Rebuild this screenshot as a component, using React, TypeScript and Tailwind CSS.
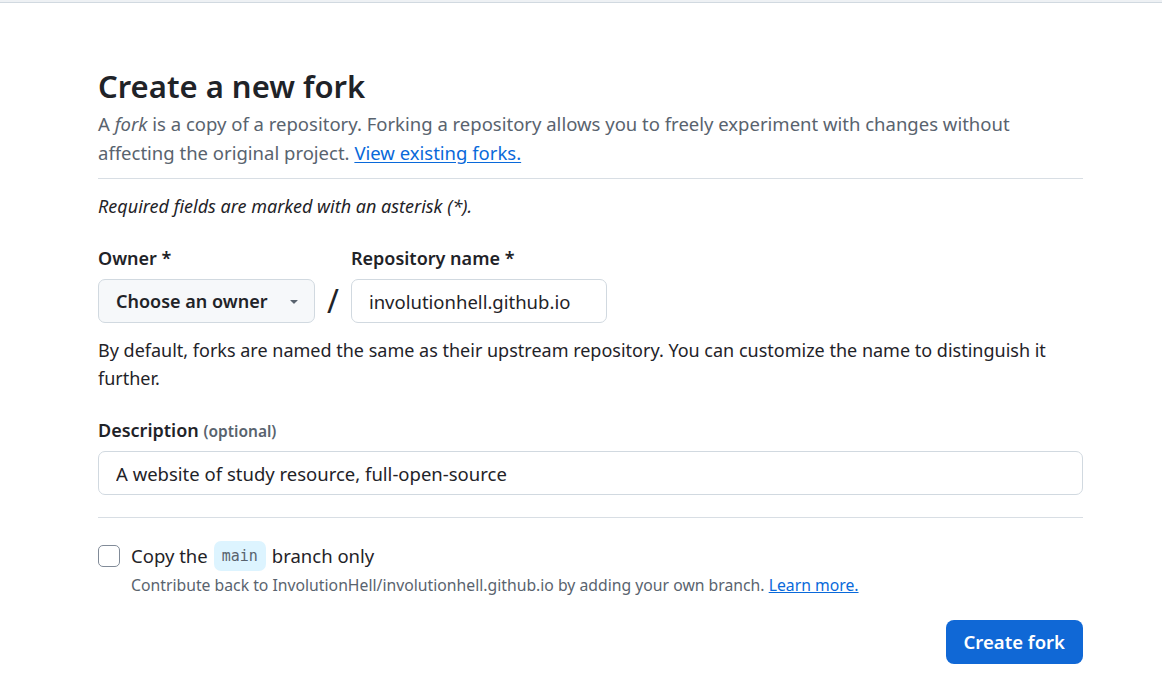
import { useState } from "react";

function Caret() {
  return (
    <svg width="16" height="16" viewBox="0 0 16 16" className="fill-[#59636e]">
      <path d="m4.427 7.427 3.396 3.396a.25.25 0 0 0 .354 0l3.396-3.396A.25.25 0 0 0 11.396 7H4.604a.25.25 0 0 0-.177.427Z" />
    </svg>
  );
}

export default function App() {
  const [repo, setRepo] = useState("involutionhell.github.io");
  const [desc, setDesc] = useState("A website of study resource, full-open-source");
  const [onlyMain, setOnlyMain] = useState(false);

  return (
    <div className="min-h-[690px] bg-white text-[#1f2328] font-['Segoe_UI','Noto_Sans',sans-serif]">
      <div className="h-[2px] bg-[#eef1f4]" />
      <div className="h-px bg-[#d1d9e0]" />

      <main className="w-[985px] ml-[98px] pt-[61px]">
        <h1 className="text-[31px] leading-[44px] font-semibold">Create a new fork</h1>
        <p className="text-[18.5px] leading-[29px] text-[#59636e] mt-[1px]">
          A <em>fork</em> is a copy of a repository. Forking a repository allows you to freely experiment with changes without
          affecting the original project.{" "}
          <a href="#" className="text-[#0969da] underline underline-offset-2">View existing forks.</a>
        </p>

        <hr className="mt-[11px] border-0 h-px bg-[#d8dee4]" />

        <p className="mt-[13px] text-[18px] leading-[28px] italic">Required fields are marked with an asterisk (*).</p>

        <div className="flex items-end gap-[12px] mt-[24px]">
          <div className="flex flex-col">
            <label className="text-[18px] leading-[28px] font-semibold">Owner *</label>
            <button className="mt-[7px] h-[44px] w-[217px] flex items-center justify-between pl-[17px] pr-[12px] bg-[#f6f8fa] border border-[#d1d9e0] rounded-[7px] text-[18px] font-semibold">
              Choose an owner
              <Caret />
            </button>
          </div>
          <span className="text-[32px] leading-[44px] font-normal">/</span>
          <div className="flex flex-col">
            <label className="text-[18px] leading-[28px] font-semibold">Repository name *</label>
            <input
              value={repo}
              onChange={(e) => setRepo(e.target.value)}
              className="mt-[7px] h-[44px] w-[256px] px-[17px] border border-[#d1d9e0] rounded-[7px] text-[18.5px] outline-none"
            />
          </div>
        </div>

        <p className="mt-[13px] text-[18px] leading-[28px]">
          By default, forks are named the same as their upstream repository. You can customize the name to distinguish it further.
        </p>

        <label className="block mt-[24px] text-[18px] leading-[28px] font-semibold">
          Description <span className="text-[15.5px] text-[#59636e]">(optional)</span>
        </label>
        <input
          value={desc}
          onChange={(e) => setDesc(e.target.value)}
          className="mt-[6px] h-[44px] w-full px-[17px] border border-[#d1d9e0] rounded-[7px] text-[18.5px] outline-none"
        />

        <hr className="mt-[22px] border-0 h-px bg-[#d8dee4]" />

        <div className="flex gap-[11px] mt-[23px]">
          <input
            type="checkbox"
            checked={onlyMain}
            onChange={(e) => setOnlyMain(e.target.checked)}
            className="mt-[4px] appearance-none w-[22px] h-[22px] border border-[#818b98] rounded-[5px] bg-white shrink-0"
          />
          <div className="flex flex-col">
            <div className="flex items-center text-[18.5px] leading-[30px]">
              Copy the
              <code className="mx-[6px] px-[8px] rounded-[7px] bg-[#ddf4ff] text-[15px] leading-[30px] text-[#59636e] font-['DejaVu_Sans_Mono',monospace]">main</code>
              branch only
            </div>
            <p className="text-[15.75px] leading-[28px] text-[#59636e]">
              Contribute back to InvolutionHell/involutionhell.github.io by adding your own branch.{" "}
              <a href="#" className="text-[#0969da] underline">Learn more.</a>
            </p>
          </div>
        </div>

        <div className="flex justify-end mt-[21px]">
          <button className="h-[44px] px-[18px] rounded-[8px] bg-[#1068d6] text-white text-[18.5px] font-semibold">
            Create fork
          </button>
        </div>
      </main>
    </div>
  );
}
